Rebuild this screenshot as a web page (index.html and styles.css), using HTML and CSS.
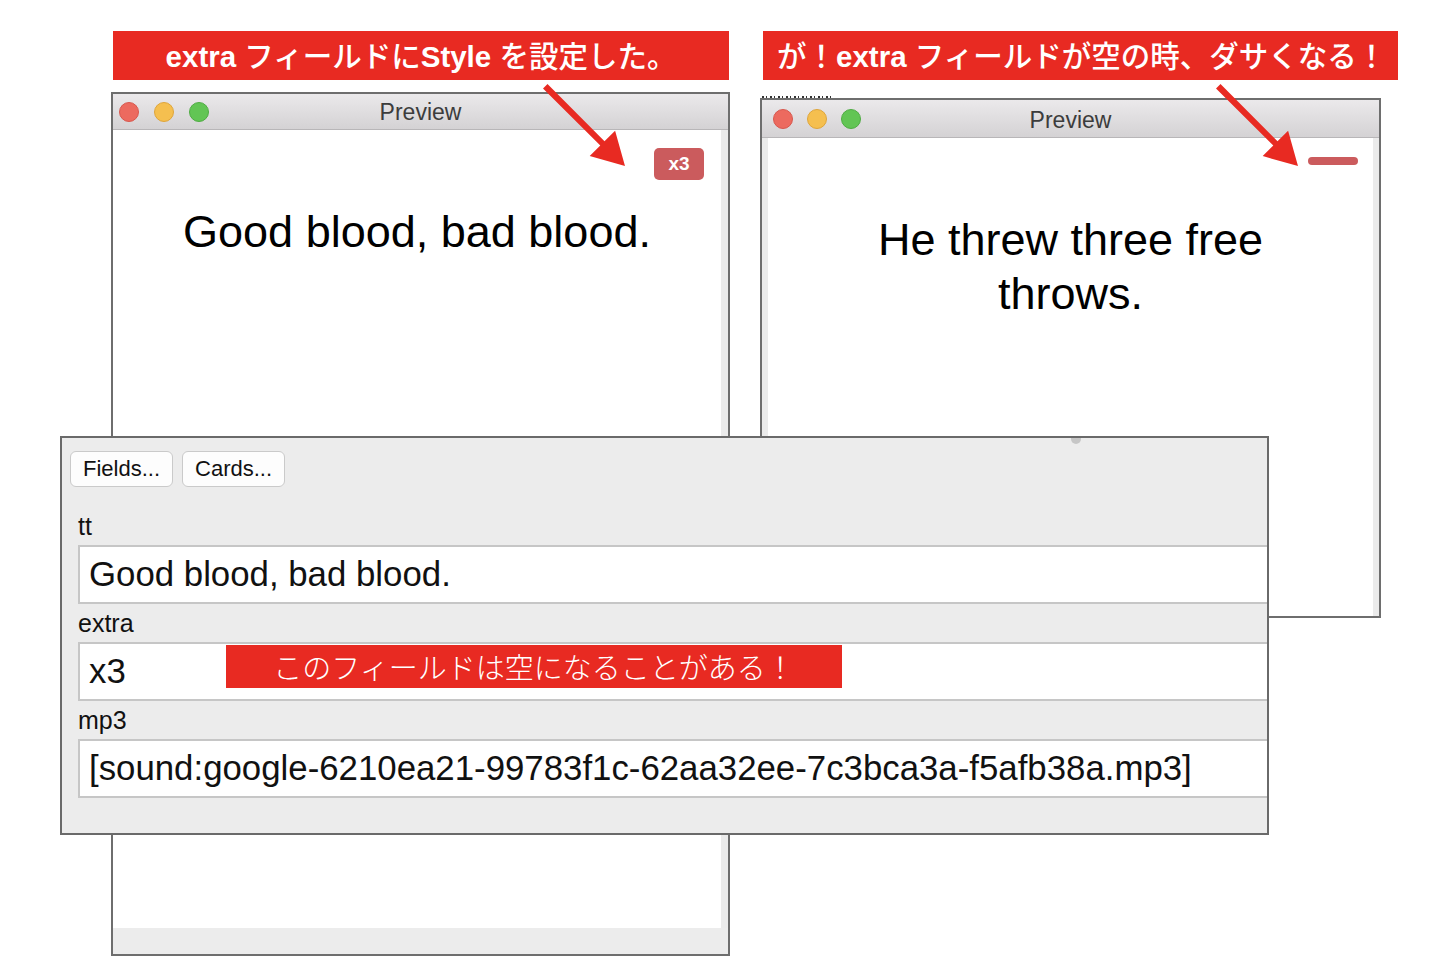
FILE: index.html
```html
<!DOCTYPE html>
<html lang="ja">
<head>
<meta charset="utf-8">
<title>Preview</title>
<link rel="stylesheet" href="styles.css">
</head>
<body>
<div class="desktop">
  <div class="banner banner-left"><b class="lat">extra</b> フィールドに<b class="lat">Style</b> を設定した。</div>
  <div class="banner banner-right">が！<b class="lat">extra</b> フィールドが空の時、ダサくなる！</div>

  <div class="window win-left">
    <div class="titlebar">
      <div class="lights"><span class="light red"></span><span class="light yellow"></span><span class="light green"></span></div>
      <div class="title">Preview</div>
      <div></div>
    </div>
    <div class="body">
      <div class="card">
        <div class="extra">x3</div>
        <div class="front">Good blood, bad blood.</div>
      </div>
      <div class="scroll"></div>
    </div>
    <div class="footer"></div>
  </div>

  <div class="peek"></div>

  <div class="window win-right">
    <div class="titlebar">
      <div class="lights"><span class="light red"></span><span class="light yellow"></span><span class="light green"></span></div>
      <div class="title">Preview</div>
      <div></div>
    </div>
    <div class="body">
      <div class="gutter"></div>
      <div class="card">
        <div class="extra"></div>
        <div class="front wrap">He threw three free throws.</div>
      </div>
      <div class="scroll"></div>
    </div>
  </div>

  <div class="editor">
    <span class="handle"></span>
    <div class="toolbar">
      <div class="btn">Fields...</div>
      <div class="btn">Cards...</div>
    </div>
    <div class="fields">
      <div class="label">tt</div>
      <div class="field">Good blood, bad blood.</div>
      <div class="label">extra</div>
      <div class="field">x3</div>
      <div class="label">mp3</div>
      <div class="field">[sound:google-6210ea21-99783f1c-62aa32ee-7c3bca3a-f5afb38a.mp3]</div>
    </div>
  </div>

  <div class="note">このフィールドは空になることがある！</div>

  <svg class="arrows" width="1432" height="980" viewBox="0 0 1432 980">
    <polygon points="547.5,84 604.5,141.3 615.1,130.7 625,166 589.7,156.1 600.3,145.5 543,88.5"/>
    <polygon transform="translate(673 0)" points="547.5,84 604.5,141.3 615.1,130.7 625,166 589.7,156.1 600.3,145.5 543,88.5"/>
  </svg>
</div>
</body>
</html>
```

FILE: styles.css
```css
* {
  box-sizing: border-box;
  margin: 0;
  padding: 0;
}

html, body {
  background: #ffffff;
}

body {
  width: 1432px;
  height: 980px;
  overflow: hidden;
  font-family: "Liberation Sans", Arial, "Noto Sans CJK JP", sans-serif;
  color: #111;
}

.desktop {
  position: relative;
  width: 1432px;
  height: 980px;
}

/* annotation banners */
.banner {
  position: absolute;
  top: 31px;
  height: 49px;
  padding-top: 2px;
  background: #e82a22;
  color: #fff;
  font-family: "Liberation Sans", "Noto Sans CJK JP", sans-serif;
  font-size: 29.5px;
  font-weight: 500;
  line-height: 47px;
  white-space: nowrap;
}

.banner .lat {
  font-weight: bold;
}

.banner-left {
  left: 113px;
  width: 616px;
  text-align: center;
}

.banner-right {
  left: 763px;
  width: 635px;
  padding-left: 14px;
}

.note {
  position: absolute;
  left: 226px;
  top: 645px;
  width: 616px;
  height: 43px;
  background: #e82a22;
  color: #fff;
  font-family: "Noto Sans CJK JP", sans-serif;
  font-size: 29px;
  font-weight: 300;
  line-height: 43px;
  text-align: center;
  z-index: 4;
}

.arrows {
  position: absolute;
  left: 0;
  top: 0;
  z-index: 5;
  fill: #e82a22;
  pointer-events: none;
}

/* preview windows */
.window {
  position: absolute;
  border: 2px solid #6e6e6e;
  background: #ececec;
  display: flex;
  flex-direction: column;
  z-index: 1;
}

.win-left {
  left: 111px;
  top: 92px;
  width: 619px;
  height: 864px;
}

.win-right {
  left: 760px;
  top: 98px;
  width: 621px;
  height: 520px;
}

.titlebar {
  flex: none;
  height: 36px;
  display: grid;
  grid-template-columns: 1fr auto 1fr;
  align-items: center;
  background: linear-gradient(#ebe9eb, #d4d2d4);
  border-bottom: 1px solid #b8b6b8;
}

.win-right .titlebar {
  height: 38px;
}

.lights {
  display: flex;
  gap: 15px;
  padding-left: 6px;
}

.win-right .lights {
  padding-left: 11px;
  gap: 14px;
}

.light {
  width: 20px;
  height: 20px;
  border-radius: 50%;
}

.red {
  background: #ec6a5f;
  border: 1px solid #d8574d;
}

.yellow {
  background: #f5bf4f;
  border: 1px solid #dfa53a;
}

.green {
  background: #62c554;
  border: 1px solid #4fac43;
}

.title {
  font-size: 23px;
  color: #3c3c3c;
  padding-top: 2px;
}

.win-right .title {
  padding-top: 4px;
}

.body {
  flex: 1;
  display: flex;
  background: #fff;
}

.card {
  flex: 1;
  position: relative;
  padding-top: 75px;
  text-align: center;
  font-size: 45px;
  line-height: 54px;
  color: #000;
}

.front.wrap {
  padding: 0 80px;
}

.extra {
  position: absolute;
  top: 18px;
  right: 17px;
  width: 50px;
  padding: 4px 0;
  border-radius: 5px;
  background: #cb5b5d;
  color: #fff;
  font-size: 19px;
  font-weight: bold;
  line-height: 24px;
  text-align: center;
}

.win-right .extra {
  top: 19px;
  right: 15px;
}

.scroll {
  flex: none;
  width: 7px;
  background: #ebebeb;
}

.win-right .scroll {
  width: 6px;
}

.gutter {
  flex: none;
  width: 6px;
  background: #ebebeb;
}

.footer {
  flex: none;
  height: 26px;
  background: #ececec;
}

/* sliver of a window hidden behind the right preview */
.peek {
  position: absolute;
  left: 762px;
  top: 96px;
  width: 71px;
  height: 3px;
  background: repeating-linear-gradient(90deg, #333 0 2px, transparent 2px 4px, #333 4px 5px, transparent 5px 8px);
}

/* editor */
.editor {
  position: absolute;
  left: 60px;
  top: 436px;
  width: 1209px;
  height: 399px;
  border: 2px solid #6a6a6a;
  background: #ececec;
  overflow: hidden;
  z-index: 3;
}

.handle {
  position: absolute;
  left: 1009px;
  top: -4px;
  width: 10px;
  height: 10px;
  border-radius: 50%;
  background: #c6c6c6;
}

.toolbar {
  display: flex;
  gap: 9px;
  padding: 13px 0 0 8px;
}

.btn {
  height: 36px;
  padding: 0 12px;
  border: 1px solid #cacaca;
  border-radius: 6px;
  background: #fdfdfd;
  font-size: 22px;
  line-height: 34px;
  color: #111;
}

.fields {
  padding: 20px 0 0 16px;
}

.label {
  height: 38px;
  padding-top: 1px;
  line-height: 36px;
  font-size: 25px;
  color: #111;
}

.field {
  height: 59px;
  border: 2px solid #c6c6c6;
  border-right: 0;
  background: #fff;
  padding-left: 9px;
  font-size: 34.8px;
  line-height: 54px;
  white-space: nowrap;
  color: #111;
}
```
